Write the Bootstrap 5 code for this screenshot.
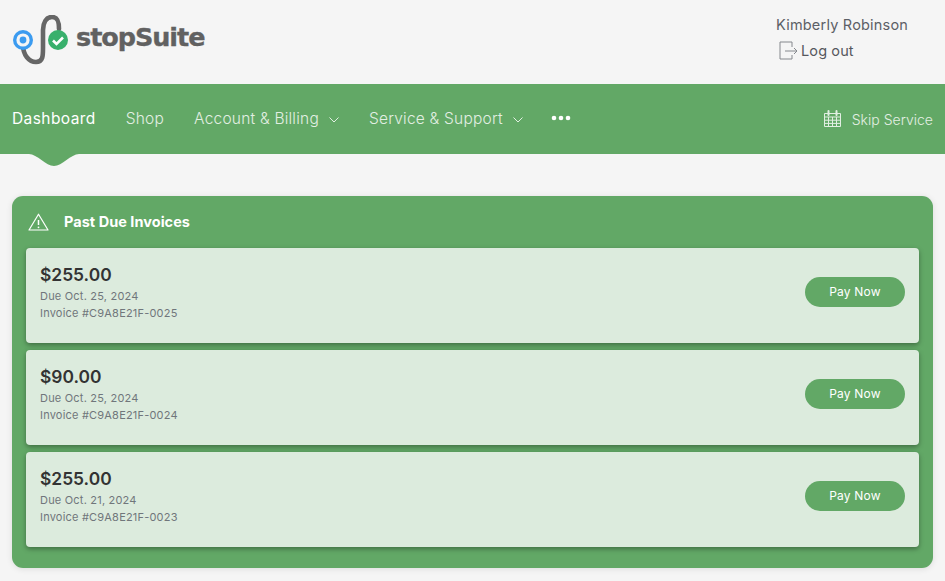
<!DOCTYPE html>
<html lang="en"><head><meta charset="utf-8"><title>stopSuite</title>
<link href="https://cdn.jsdelivr.net/npm/bootstrap@5.3.0/dist/css/bootstrap.min.css" rel="stylesheet">
<style>
html,body{height:581px;overflow:hidden}
body{background:#f5f5f5;font-family:Inter,"Liberation Sans",sans-serif;color:#333}
.top-bar{height:84px;padding:0 37px 4px 13px}
.logo-word{font-family:"DejaVu Sans",sans-serif;font-weight:700;font-size:25.5px;letter-spacing:-1.05px;color:#616161;line-height:1;margin-left:7px;margin-top:-4px;-webkit-text-stroke:.35px #616161}
.user-box{width:132px;font-size:14.5px;color:#5c5f66;margin-top:-4px}
.user-name{line-height:24px;letter-spacing:.2px;padding-bottom:1px;white-space:nowrap}
.logout{line-height:26px;color:#55585e;font-weight:400;font-size:14.5px;letter-spacing:.12px}
.logout svg{margin:0 3px 0 3px}
.green-nav{height:70px;background:#62a866;padding:0 12px}
.green-nav .nav-item-x{color:#e2efe3;font-size:15.5px;margin-right:30px;letter-spacing:.22px;font-weight:300;white-space:nowrap;text-decoration:none}
.green-nav .nav-item-x.on{color:#fff;font-weight:400;letter-spacing:.42px}
.caret-ic{margin-left:10px}
.dots-ic{margin:-3px 0 0 -2px}
.skip-link{color:#e2efe3;font-size:14px;font-weight:300;letter-spacing:.02px;gap:11px}
.nav-notch{position:absolute;left:29px;top:154px}
.page-wrap{padding:42px 12px 0}
.due-panel{background:#62a866;border-radius:11px;height:372px;padding:0 14px;box-shadow:0 1px 6px rgba(0,0,0,.1)}
.panel-head{height:52px;color:#fff;font-weight:700;font-size:14.5px;letter-spacing:.03px;padding-bottom:1px}
.panel-head svg{margin:1px 15px 0 2px}
.invoice-card{background:#dcebdd;border-radius:4px;height:95px;margin-bottom:7px;padding:15px 14px 0;box-shadow:0 2px 5px rgba(0,0,0,.35)}
.inv-amount{font-size:17.4px;font-weight:600;color:#333;line-height:24px;padding-bottom:1px}
.inv-line{font-size:11px;color:#70767b;line-height:17px;letter-spacing:.2px}
.pay-btn{background:#62a866;color:#fff;border:0;border-radius:15px;width:100px;height:30px;font-size:12px;letter-spacing:.2px;padding:0;margin-top:14px;font-weight:400}
</style></head><body>
<header class="top-bar d-flex align-items-center justify-content-between">
  <div class="d-flex align-items-center">
    <svg width="56" height="50" viewBox="0 0 56 50" aria-hidden="true"><path d="M10 30c0 10 6 17 13 17s7-6 7-14V15c0-7 3-13 9-13s7 5 7 12" fill="none" stroke="#666" stroke-width="4.6" stroke-linecap="round"/><circle cx="10" cy="25" r="10" fill="#3b9bf0"/><circle cx="10" cy="25" r="6.600" fill="#f5f5f5"/><circle cx="10" cy="25" r="3.400" fill="#3b9bf0"/><circle cx="45" cy="25" r="10" fill="#38b06c"/><path d="M40 25.500l3.500 3.500 6.500-6.500" fill="none" stroke="#fff" stroke-width="2.600"/></svg>
    <div class="logo-word">stopSuite</div>
  </div>
  <div class="user-box">
    <div class="user-name">Kimberly Robinson</div>
    <div class="logout d-flex align-items-center"><svg width="19" height="20" viewBox="0 0 19 20" aria-hidden="true"><path d="M13 6V1H1v17h12v-4M6 10h12M15 7l3 3-3 3" fill="none" stroke="#85888d" stroke-width="1"/></svg>Log out</div>
  </div>
</header>
<nav class="green-nav d-flex align-items-center">
  <a class="nav-item-x on" href="#">Dashboard</a>
  <a class="nav-item-x" href="#">Shop</a>
  <a class="nav-item-x" href="#">Account &amp; Billing<svg class="caret-ic" width="10" height="6" viewBox="0 0 10 6"><path d="M.5.5 5 5l4.500-4.500" fill="none" stroke="#e2efe3"/></svg></a>
  <a class="nav-item-x" href="#">Service &amp; Support<svg class="caret-ic" width="10" height="6" viewBox="0 0 10 6"><path d="M.5.5 5 5l4.500-4.500" fill="none" stroke="#e2efe3"/></svg></a>
  <svg class="dots-ic" width="20" height="6" viewBox="0 0 20 6"><circle cx="3" cy="3" r="2.300" fill="#fff"/><circle cx="10" cy="3" r="2.300" fill="#fff"/><circle cx="17" cy="3" r="2.300" fill="#fff"/></svg>
  <div class="skip-link ms-auto d-flex align-items-center">
    <svg width="17" height="18" viewBox="0 0 17 18"><path d="M.5 3.500h16v13H.5zM.5 7h16M4.500 7v9.500M8.500 7v9.500M12.500 7v9.500M.5 10.200h16M.5 13.400h16" fill="none" stroke="#e2efe3"/><path d="M4.500 1v4M12.500 1v4" stroke="#e2efe3" stroke-width="2" stroke-linecap="round"/></svg><span>Skip Service</span></div>
</nav>
<svg class="nav-notch" width="50" height="13" viewBox="0 0 50 13"><path d="M0 0c8 0 17 12 25 12S42 0 50 0z" fill="#62a866"/></svg>
<main class="page-wrap">
  <section class="due-panel">
    <div class="panel-head d-flex align-items-center"><svg width="21" height="18" viewBox="0 0 21 18"><path d="M10.500 1.200 20 17H1z" fill="none" stroke="#fff" stroke-width="1.200" stroke-linejoin="round"/><path d="M10.500 7v5" stroke="#fff" stroke-width="1.500"/><circle cx="10.500" cy="14.300" r=".9" fill="#fff"/></svg>Past Due Invoices</div>
    <div class="invoice-card d-flex justify-content-between">
      <div><div class="inv-amount">$255.00</div><div class="inv-line">Due Oct. 25, 2024</div><div class="inv-line">Invoice #C9A8E21F-0025</div></div>
      <button class="pay-btn" type="button">Pay Now</button>
    </div>
    <div class="invoice-card d-flex justify-content-between">
      <div><div class="inv-amount">$90.00</div><div class="inv-line">Due Oct. 25, 2024</div><div class="inv-line">Invoice #C9A8E21F-0024</div></div>
      <button class="pay-btn" type="button">Pay Now</button>
    </div>
    <div class="invoice-card d-flex justify-content-between">
      <div><div class="inv-amount">$255.00</div><div class="inv-line">Due Oct. 21, 2024</div><div class="inv-line">Invoice #C9A8E21F-0023</div></div>
      <button class="pay-btn" type="button">Pay Now</button>
    </div>
  </section>
</main>
</body></html>
